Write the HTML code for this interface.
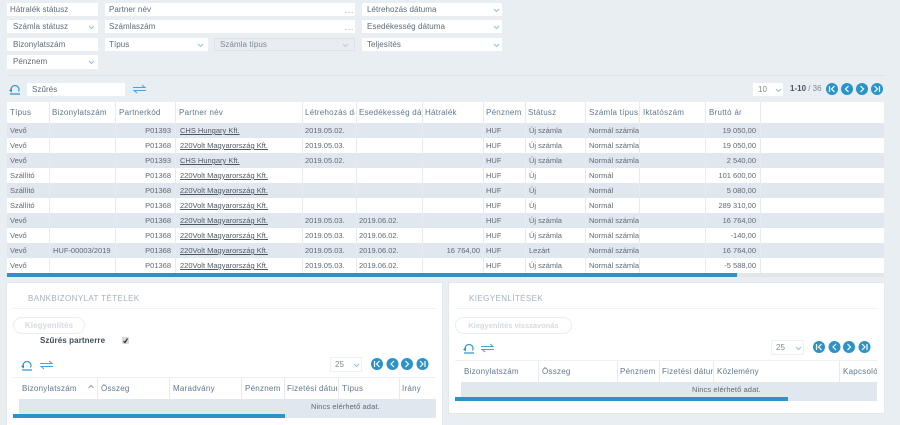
<!DOCTYPE html>
<html><head><meta charset="utf-8">
<style>
html,body{margin:0;padding:0}
body{width:900px;height:425px;overflow:hidden;background:#e9eef3;position:relative;font-family:"Liberation Sans",sans-serif;font-size:8px;color:#5a6670}
.a{position:absolute;white-space:nowrap;overflow:hidden}
.f{position:absolute;background:#fff;height:13px;line-height:13px;font-size:8px;letter-spacing:.06px;color:#5c6b78;white-space:nowrap;overflow:hidden}
.dots{position:absolute;right:1px;top:1px;font-size:8px;letter-spacing:.8px;color:#7a8792}
.r{position:absolute;left:7px;width:877px;height:15px;background:#fff}
.r.g{background:#e1e7ee}
.c{position:absolute;top:0;height:15px;line-height:15px;font-size:7.5px;color:#5f6a73;white-space:nowrap;overflow:hidden}
.rt{text-align:right}
.u{text-decoration:underline;color:#4e5962}
.h{position:absolute;line-height:21px;height:21px;font-size:8px;letter-spacing:.25px;color:#60788c;white-space:nowrap;overflow:hidden}
.v{position:absolute;width:1px;background:#e6ebf0}
.t{position:absolute;font-size:8px;letter-spacing:.4px;color:#a4b1c2;line-height:10px;white-space:nowrap}
.b{position:absolute;border:1px solid #e9eef3;border-radius:9px;height:15px;line-height:15px;text-align:center;font-size:8px;font-weight:bold;color:#d3dbe5;background:#fff}
svg{position:absolute;overflow:visible}
</style></head><body>

<div class="f" style="left:7px;top:3px;width:88px;padding-left:3px">Hátralék státusz</div>
<div class="f" style="left:7px;top:20px;width:85px;padding-left:6px">Számla státusz<svg width="7" height="5" style="left:81px;top:5px"><path d="M1 1l2.500 2.500L6 1" fill="none" stroke="#8cc4e3"/></svg></div>
<div class="f" style="left:7px;top:38px;width:85px;padding-left:6px">Bizonylatszám</div>
<div class="f" style="left:7px;top:55px;width:85px;padding-left:6px;height:14px">Pénznem<svg width="7" height="5" style="left:81px;top:5px"><path d="M1 1l2.500 2.500L6 1" fill="none" stroke="#8cc4e3"/></svg></div>

<div class="f" style="left:105px;top:3px;width:246px;padding-left:4px">Partner név<span class="dots">...</span></div>
<div class="f" style="left:105px;top:20px;width:246px;padding-left:4px">Számlaszám<span class="dots">...</span></div>
<div class="f" style="left:105px;top:38px;width:99px;padding-left:4px">Típus<svg width="7" height="5" style="left:92px;top:5px"><path d="M1 1l2.500 2.500L6 1" fill="none" stroke="#8cc4e3"/></svg></div>
<div class="f" style="left:214px;top:38px;width:134px;padding-left:5px;height:11px;line-height:11px;background:#e9edf1;border:1px solid #dde3e9;color:#7d8994">Számla típus<svg width="7" height="5" style="left:127px;top:4px"><path d="M1 1l2.500 2.500L6 1" fill="none" stroke="#c3cbd3"/></svg></div>

<div class="f" style="left:362px;top:3px;width:135px;padding-left:5px">Létrehozás dátuma<svg width="7" height="5" style="left:131px;top:5px"><path d="M1 1l2.500 2.500L6 1" fill="none" stroke="#8cc4e3"/></svg></div>
<div class="f" style="left:362px;top:20px;width:135px;padding-left:5px">Esedékesség dátuma<svg width="7" height="5" style="left:131px;top:5px"><path d="M1 1l2.500 2.500L6 1" fill="none" stroke="#8cc4e3"/></svg></div>
<div class="f" style="left:362px;top:38px;width:135px;padding-left:5px">Teljesítés<svg width="7" height="5" style="left:131px;top:5px"><path d="M1 1l2.500 2.500L6 1" fill="none" stroke="#8cc4e3"/></svg></div>

<div class="a" style="left:7px;top:75px;width:877px;height:1px;background:#dde3e9"></div>

<svg width="12" height="11" style="left:9px;top:84px"><path d="M2.500 7.500A4 4 0 1 1 9.500 7.500" fill="none" stroke="#2b93c9" stroke-width="1.100"/><path d="M0 6.500l3 -2v4z" fill="#2b93c9"/><path d="M1 10h10" stroke="#2b93c9" stroke-width="1.200"/></svg>
<div class="f" style="left:27px;top:83px;width:93px;padding-left:5px">Szűrés</div>
<svg width="13" height="10" style="left:133px;top:84px"><path d="M0 3.500h12L9 1M13 6.500H1L4 9" fill="none" stroke="#4ba3d3" stroke-width="1"/></svg>

<div class="f" style="left:753px;top:83px;width:25px;padding-left:5px;color:#7a8792">10<svg width="7" height="5" style="left:22px;top:5px"><path d="M1 1l2.500 2.500L6 1" fill="none" stroke="#8cc4e3"/></svg></div>
<div class="a" style="left:790px;top:83px;line-height:12px;font-size:8px;color:#7a8792"><b style="color:#4a5560">1-10</b> / 36</div>

<svg width="60" height="14" style="left:825px;top:82px"><g fill="#2b93c9"><circle cx="7" cy="7" r="6"/><circle cx="22" cy="7" r="6"/><circle cx="37" cy="7" r="6"/><circle cx="52" cy="7" r="6"/></g><g fill="none" stroke="#fff" stroke-width="1.200"><path d="M4.500 4v6M9.500 4L6.500 7l3 3M23.500 4l-3 3 3 3M35.500 4l3 3-3 3M49.500 4l3 3-3 3M54.500 4v6"/></g></svg>

<div class="a" style="left:7px;top:102px;width:877px;height:21px;background:#fff"></div>
<div class="h" style="left:10px;top:102px">Típus</div>
<div class="h" style="left:52px;top:102px">Bizonylatszám</div>
<div class="h" style="left:119px;top:102px">Partnerkód</div>
<div class="h" style="left:179px;top:102px">Partner név</div>
<div class="h" style="left:305px;top:102px;width:50px">Létrehozás dátuma</div>
<div class="h" style="left:359px;top:102px;width:63px">Esedékesség dátuma</div>
<div class="h" style="left:425px;top:102px">Hátralék</div>
<div class="h" style="left:486px;top:102px">Pénznem</div>
<div class="h" style="left:528px;top:102px">Státusz</div>
<div class="h" style="left:589px;top:102px">Számla típus</div>
<div class="h" style="left:643px;top:102px">Iktatószám</div>
<div class="h" style="left:709px;top:102px">Bruttó ár</div>

<div class="r g" style="top:123px"><span class="c" style="left:3px">Vevő</span><span class="c rt" style="left:108px;width:56px">P01393</span><span class="c u" style="left:173px">CHS Hungary Kft.</span><span class="c" style="left:298px">2019.05.02.</span><span class="c" style="left:479px">HUF</span><span class="c" style="left:522px">Új számla</span><span class="c" style="left:582px;width:50px">Normál számla</span><span class="c rt" style="left:693px;width:56px">19 050,00</span></div>
<div class="r" style="top:138px"><span class="c" style="left:3px">Vevő</span><span class="c rt" style="left:108px;width:56px">P01368</span><span class="c u" style="left:173px">220Volt Magyarország Kft.</span><span class="c" style="left:298px">2019.05.03.</span><span class="c" style="left:479px">HUF</span><span class="c" style="left:522px">Új számla</span><span class="c" style="left:582px;width:50px">Normál számla</span><span class="c rt" style="left:693px;width:56px">19 050,00</span></div>
<div class="r g" style="top:153px"><span class="c" style="left:3px">Vevő</span><span class="c rt" style="left:108px;width:56px">P01393</span><span class="c u" style="left:173px">CHS Hungary Kft.</span><span class="c" style="left:298px">2019.05.02.</span><span class="c" style="left:479px">HUF</span><span class="c" style="left:522px">Új számla</span><span class="c" style="left:582px;width:50px">Normál számla</span><span class="c rt" style="left:693px;width:56px">2 540,00</span></div>
<div class="r" style="top:168px"><span class="c" style="left:3px">Szállító</span><span class="c rt" style="left:108px;width:56px">P01368</span><span class="c u" style="left:173px">220Volt Magyarország Kft.</span><span class="c" style="left:479px">HUF</span><span class="c" style="left:522px">Új</span><span class="c" style="left:582px">Normál</span><span class="c rt" style="left:693px;width:56px">101 600,00</span></div>
<div class="r g" style="top:183px"><span class="c" style="left:3px">Szállító</span><span class="c rt" style="left:108px;width:56px">P01368</span><span class="c u" style="left:173px">220Volt Magyarország Kft.</span><span class="c" style="left:479px">HUF</span><span class="c" style="left:522px">Új</span><span class="c" style="left:582px">Normál</span><span class="c rt" style="left:693px;width:56px">5 080,00</span></div>
<div class="r" style="top:198px"><span class="c" style="left:3px">Szállító</span><span class="c rt" style="left:108px;width:56px">P01368</span><span class="c u" style="left:173px">220Volt Magyarország Kft.</span><span class="c" style="left:479px">HUF</span><span class="c" style="left:522px">Új</span><span class="c" style="left:582px">Normál</span><span class="c rt" style="left:693px;width:56px">289 310,00</span></div>
<div class="r g" style="top:213px"><span class="c" style="left:3px">Vevő</span><span class="c rt" style="left:108px;width:56px">P01368</span><span class="c u" style="left:173px">220Volt Magyarország Kft.</span><span class="c" style="left:298px">2019.05.03.</span><span class="c" style="left:352px">2019.06.02.</span><span class="c" style="left:479px">HUF</span><span class="c" style="left:522px">Új számla</span><span class="c" style="left:582px;width:50px">Normál számla</span><span class="c rt" style="left:693px;width:56px">16 764,00</span></div>
<div class="r" style="top:228px"><span class="c" style="left:3px">Vevő</span><span class="c rt" style="left:108px;width:56px">P01368</span><span class="c u" style="left:173px">220Volt Magyarország Kft.</span><span class="c" style="left:298px">2019.05.03.</span><span class="c" style="left:352px">2019.06.02.</span><span class="c" style="left:479px">HUF</span><span class="c" style="left:522px">Új számla</span><span class="c" style="left:582px;width:50px">Normál számla</span><span class="c rt" style="left:693px;width:56px">-140,00</span></div>
<div class="r g" style="top:243px"><span class="c" style="left:3px">Vevő</span><span class="c" style="left:46px">HUF-00003/2019</span><span class="c rt" style="left:108px;width:56px">P01368</span><span class="c u" style="left:173px">220Volt Magyarország Kft.</span><span class="c" style="left:298px">2019.05.03.</span><span class="c" style="left:352px">2019.06.02.</span><span class="c rt" style="left:416px;width:57px">16 764,00</span><span class="c" style="left:479px">HUF</span><span class="c" style="left:522px">Lezárt</span><span class="c" style="left:582px;width:50px">Normál számla</span><span class="c rt" style="left:693px;width:56px">16 764,00</span></div>
<div class="r" style="top:258px"><span class="c" style="left:3px">Vevő</span><span class="c rt" style="left:108px;width:56px">P01368</span><span class="c u" style="left:173px">220Volt Magyarország Kft.</span><span class="c" style="left:298px">2019.05.03.</span><span class="c" style="left:352px">2019.06.02.</span><span class="c" style="left:479px">HUF</span><span class="c" style="left:522px">Új számla</span><span class="c" style="left:582px;width:50px">Normál számla</span><span class="c rt" style="left:693px;width:56px">-5 588,00</span></div>

<div class="v" style="left:49px;top:102px;height:171px"></div>
<div class="v" style="left:115px;top:102px;height:171px"></div>
<div class="v" style="left:175px;top:102px;height:171px"></div>
<div class="v" style="left:302px;top:102px;height:171px"></div>
<div class="v" style="left:356px;top:102px;height:171px"></div>
<div class="v" style="left:422px;top:102px;height:171px"></div>
<div class="v" style="left:483px;top:102px;height:171px"></div>
<div class="v" style="left:525px;top:102px;height:171px"></div>
<div class="v" style="left:585px;top:102px;height:171px"></div>
<div class="v" style="left:639px;top:102px;height:171px"></div>
<div class="v" style="left:705px;top:102px;height:171px"></div>
<div class="v" style="left:760px;top:102px;height:171px"></div>

<div class="a" style="left:7px;top:273px;width:877px;height:4px;background:#e1e6eb"></div>
<div class="a" style="left:7px;top:273px;width:730px;height:4px;background:#2b93c9"></div>

<!-- left panel -->
<div class="a" style="left:7px;top:283px;width:435px;height:142px;background:#fff;box-shadow:0 0 0 1px #e3e8ed"></div>
<div class="t" style="left:28px;top:294px">BANKBIZONYLAT TÉTELEK</div>
<div class="a" style="left:13px;top:308px;width:423px;height:1px;background:#eef3f8"></div>
<div class="b" style="left:13px;top:317px;width:70px;letter-spacing:.1px">Kiegyenlítés</div>
<div class="a" style="left:40px;top:336px;line-height:10px;font-size:8px;font-weight:bold;color:#3f4e5c;letter-spacing:.1px">Szűrés partnerre</div>
<div class="a" style="left:122px;top:337px;width:7px;height:7px;background:#d8d8d8;border-radius:1px"></div>
<svg width="7" height="7" style="left:122px;top:337px"><path d="M1.500 4l1.500 1.500L5.500 1.500" fill="none" stroke="#333" stroke-width="1.200"/></svg>
<svg width="12" height="11" style="left:21px;top:360px"><path d="M2.500 7.500A4 4 0 1 1 9.500 7.500" fill="none" stroke="#2b93c9" stroke-width="1.100"/><path d="M0 6.500l3 -2v4z" fill="#2b93c9"/><path d="M1 10h10" stroke="#2b93c9" stroke-width="1.200"/></svg>
<svg width="13" height="10" style="left:40px;top:360px"><path d="M0 3.500h12L9 1M13 6.500H1L4 9" fill="none" stroke="#4ba3d3" stroke-width="1"/></svg>
<div class="f" style="left:331px;top:358px;width:26px;height:13px;padding-left:4px;box-shadow:0 0 0 1px #eef1f4;color:#7a8792">25<svg width="7" height="5" style="left:22px;top:5px"><path d="M1 1l2.500 2.500L6 1" fill="none" stroke="#8cc4e3"/></svg></div>
<svg width="60" height="14" style="left:370px;top:357px"><g fill="#2b93c9"><circle cx="7" cy="7" r="6"/><circle cx="22.500" cy="7" r="6"/><circle cx="37" cy="7" r="6"/><circle cx="52.500" cy="7" r="6"/></g><g fill="none" stroke="#fff" stroke-width="1.200"><path d="M4.500 4v6M9.500 4L6.500 7l3 3M24 4l-3 3 3 3M35.500 4l3 3-3 3M50 4l3 3-3 3M55 4v6"/></g></svg>

<div class="a" style="left:13px;top:377px;width:423px;height:1px;background:#eef1f4"></div>
<div class="h" style="left:22px;top:378px">Bizonylatszám</div>
<svg width="6" height="4" style="left:88px;top:385px"><path d="M.5 3L3 .5 5.500 3" fill="none" stroke="#8b9aa8"/></svg>
<div class="h" style="left:101px;top:378px">Összeg</div>
<div class="h" style="left:173px;top:378px">Maradvány</div>
<div class="h" style="left:245px;top:378px">Pénznem</div>
<div class="h" style="left:287px;top:378px;width:50px">Fizetési dátuma</div>
<div class="h" style="left:342px;top:378px">Típus</div>
<div class="h" style="left:402px;top:378px">Irány</div>
<div class="v" style="left:97px;top:378px;height:21px"></div>
<div class="v" style="left:169px;top:378px;height:21px"></div>
<div class="v" style="left:241px;top:378px;height:21px"></div>
<div class="v" style="left:284px;top:378px;height:21px"></div>
<div class="v" style="left:338px;top:378px;height:21px"></div>
<div class="v" style="left:399px;top:378px;height:21px"></div>
<div class="a" style="left:19px;top:399px;width:417px;height:19px;background:#e1e7ee"></div>
<div class="a" style="left:311px;top:401px;line-height:11px;font-size:7.5px;letter-spacing:.1px;color:#5f6a73">Nincs elérhető adat.</div>
<div class="a" style="left:13px;top:414px;width:272px;height:4px;background:#2b93c9"></div>

<!-- right panel -->
<div class="a" style="left:449px;top:283px;width:435px;height:130px;background:#fff;box-shadow:0 0 0 1px #e3e8ed"></div>
<div class="t" style="left:469px;top:294px">KIEGYENLÍTÉSEK</div>
<div class="a" style="left:455px;top:308px;width:422px;height:1px;background:#eef3f8"></div>
<div class="b" style="left:455px;top:317px;width:115px;font-size:7.5px">Kiegyenlítés visszavonás</div>
<svg width="12" height="11" style="left:463px;top:343px"><path d="M2.500 7.500A4 4 0 1 1 9.500 7.500" fill="none" stroke="#2b93c9" stroke-width="1.100"/><path d="M0 6.500l3 -2v4z" fill="#2b93c9"/><path d="M1 10h10" stroke="#2b93c9" stroke-width="1.200"/></svg>
<svg width="13" height="10" style="left:481px;top:343px"><path d="M0 3.500h12L9 1M13 6.500H1L4 9" fill="none" stroke="#4ba3d3" stroke-width="1"/></svg>
<div class="f" style="left:772px;top:341px;width:27px;padding-left:4px;box-shadow:0 0 0 1px #eef1f4;color:#7a8792">25<svg width="7" height="5" style="left:23px;top:5px"><path d="M1 1l2.500 2.500L6 1" fill="none" stroke="#8cc4e3"/></svg></div>
<svg width="60" height="14" style="left:812px;top:340px"><g fill="#2b93c9"><circle cx="7" cy="7" r="6"/><circle cx="22.500" cy="7" r="6"/><circle cx="37" cy="7" r="6"/><circle cx="52.500" cy="7" r="6"/></g><g fill="none" stroke="#fff" stroke-width="1.200"><path d="M4.500 4v6M9.500 4L6.500 7l3 3M24 4l-3 3 3 3M35.500 4l3 3-3 3M50 4l3 3-3 3M55 4v6"/></g></svg>

<div class="a" style="left:455px;top:360px;width:422px;height:1px;background:#eef1f4"></div>
<div class="h" style="left:464px;top:361px">Bizonylatszám</div>
<div class="h" style="left:542px;top:361px">Összeg</div>
<div class="h" style="left:620px;top:361px">Pénznem</div>
<div class="h" style="left:662px;top:361px;width:51px">Fizetési dátuma</div>
<div class="h" style="left:717px;top:361px">Közlemény</div>
<div class="h" style="left:843px;top:361px;width:34px">Kapcsoló</div>
<div class="v" style="left:538px;top:361px;height:21px"></div>
<div class="v" style="left:617px;top:361px;height:21px"></div>
<div class="v" style="left:659px;top:361px;height:21px"></div>
<div class="v" style="left:713px;top:361px;height:21px"></div>
<div class="v" style="left:839px;top:361px;height:21px"></div>
<div class="a" style="left:461px;top:382px;width:416px;height:19px;background:#e1e7ee"></div>
<div class="a" style="left:692px;top:384px;line-height:11px;font-size:7.5px;letter-spacing:.1px;color:#5f6a73">Nincs elérhető adat.</div>
<div class="a" style="left:455px;top:397px;width:333px;height:4px;background:#2b93c9"></div>

</body></html>
